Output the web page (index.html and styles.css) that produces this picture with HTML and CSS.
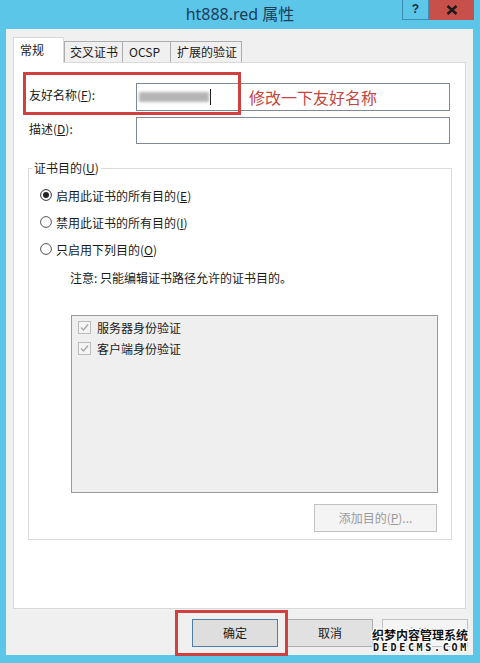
FILE: index.html
```html
<!DOCTYPE html>
<html lang="zh-CN">
<head>
<meta charset="UTF-8">
<title>ht888.red 属性</title>
<link rel="stylesheet" href="styles.css">
</head>
<body>

<div class="window">
  <div class="titlebar">
    <span class="title">ht888.red 属性</span>
    <div class="controls">
      <div class="btn-help">?</div>
      <div class="btn-close">
        <svg width="12" height="10" viewBox="0 0 12 10"><path d="M1.5 1 L10.5 9 M10.5 1 L1.5 9" stroke="#1b1b1b" stroke-width="2.4"/></svg>
      </div>
    </div>
  </div>

  <div class="dialog">
    <div class="tabs">
      <div class="tab active w-general">常规</div>
      <div class="tab w-cross">交叉证书</div>
      <div class="tab w-ocsp">OCSP</div>
      <div class="tab w-ext">扩展的验证</div>
    </div>

    <div class="panel">
      <div class="form">
        <label class="form-label">友好名称(<u>F</u>):</label>
        <div class="field">
          <span class="blurred"></span>
          <span class="caret"></span>
          <span class="note-red">修改一下友好名称</span>
        </div>
        <label class="form-label">描述(<u>D</u>):</label>
        <div class="field"></div>
      </div>

      <div class="group">
        <div class="group-title">证书目的(<u>U</u>)</div>
        <div class="radios">
          <div class="radio-row">
            <svg width="12" height="12" viewBox="0 0 12 12"><circle cx="6" cy="6" r="5.4" fill="#fff" stroke="#333" stroke-width="1"/><circle cx="6" cy="6" r="3" fill="#222"/></svg>
            <span>启用此证书的所有目的(<u>E</u>)</span>
          </div>
          <div class="radio-row">
            <svg width="12" height="12" viewBox="0 0 12 12"><circle cx="6" cy="6" r="5.4" fill="#fff" stroke="#555" stroke-width="1"/></svg>
            <span>禁用此证书的所有目的(<u>I</u>)</span>
          </div>
          <div class="radio-row">
            <svg width="12" height="12" viewBox="0 0 12 12"><circle cx="6" cy="6" r="5.4" fill="#fff" stroke="#555" stroke-width="1"/></svg>
            <span>只启用下列目的(<u>O</u>)</span>
          </div>
        </div>
        <div class="hint">注意: 只能编辑证书路径允许的证书目的。</div>

        <div class="listbox">
          <div class="list-item">
            <svg width="13" height="13" viewBox="0 0 13 13"><rect x="0.5" y="0.5" width="12" height="12" fill="#f4f4f4" stroke="#bcbcbc"/><path d="M3 6.5 L5.5 9 L10 3.5" fill="none" stroke="#a8a8a8" stroke-width="1.4"/></svg>
            <span>服务器身份验证</span>
          </div>
          <div class="list-item">
            <svg width="13" height="13" viewBox="0 0 13 13"><rect x="0.5" y="0.5" width="12" height="12" fill="#f4f4f4" stroke="#bcbcbc"/><path d="M3 6.5 L5.5 9 L10 3.5" fill="none" stroke="#a8a8a8" stroke-width="1.4"/></svg>
            <span>客户端身份验证</span>
          </div>
        </div>

        <div class="add-row">
          <div class="button disabled wide">添加目的(<u>P</u>)...</div>
        </div>
      </div>

      <div class="mark mark-name"></div>
    </div>

    <div class="actions">
      <div class="button default">确定</div>
      <div class="button">取消</div>
      <div class="button disabled">应用(<u>A</u>)</div>
    </div>

    <div class="mark mark-ok"></div>
  </div>

  <div class="watermark">
    <div class="wm-cn">织梦内容管理系统</div>
    <div class="wm-en">DEDECMS.COM</div>
  </div>
</div>

</body>
</html>
```

FILE: styles.css
```css
body {
  margin: 0;
  background-color: #5bc6e8;
  font-family: "Noto Sans CJK SC", "Noto Sans", sans-serif;
  font-size: 12px;
  color: #1a1a1a;
}

.window {
  position: relative;
  width: 480px;
  height: 663px;
  overflow: hidden;
}

/* title bar */
.titlebar {
  position: relative;
  height: 29px;
  text-align: center;
}

.title {
  display: inline-block;
  font-family: "Noto Sans", "Noto Sans CJK SC", sans-serif;
  font-size: 16px;
  line-height: 28px;
  color: #1e3d5c;
}

.controls {
  position: absolute;
  top: 0;
  right: 6px;
  display: flex;
}

.btn-help {
  width: 27px;
  height: 20px;
  box-sizing: border-box;
  border: 1px solid #3a8fb5;
  border-top: none;
  font-family: "Liberation Sans", sans-serif;
  font-weight: bold;
  font-size: 12px;
  line-height: 18px;
  text-align: center;
  color: #1b2f45;
}

.btn-close {
  width: 45px;
  height: 20px;
  background-color: #c7504b;
  display: flex;
  align-items: center;
  justify-content: center;
}

/* dialog body */
.dialog {
  position: relative;
  margin: 0 7px 0 6px;
  height: 626px;
  box-sizing: border-box;
  padding: 8px 7px 0 7px;
  background-color: #f0f0f0;
}

.tabs {
  display: flex;
  align-items: flex-end;
  height: 25px;
}

.tab {
  height: 21px;
  box-sizing: border-box;
  padding-left: 5px;
  border: 1px solid #adadad;
  border-bottom: none;
  border-left: none;
  background-color: #f0f0f0;
  line-height: 19px;
}

.tab.w-cross { border-left: 1px solid #adadad; }

.tab.active {
  position: relative;
  z-index: 1;
  height: 26px;
  margin-bottom: -1px;
  padding-left: 6px;
  line-height: 24px;
  background-color: #fff;
  border: 1px solid #d9d9d9;
  border-bottom: none;
}

.w-general { width: 51px; }
.w-cross { width: 59px; }
.w-ocsp { width: 48px; padding-left: 6px; }
.w-ext { width: 71px; padding-left: 6px; }

.panel {
  position: relative;
  height: 547px;
  box-sizing: border-box;
  border: 1px solid #d9d9d9;
  background-color: #fff;
  padding: 20px 0 0 14px;
}

.form {
  display: grid;
  grid-template-columns: 107px 314px;
  row-gap: 6px;
  padding-left: 1px;
}

.form-label {
  padding-top: 4px;
  line-height: 16px;
}

.field {
  height: 28px;
  box-sizing: border-box;
  border: 1px solid #7d8a96;
  background-color: #fff;
  display: flex;
  align-items: center;
  padding-left: 2px;
}

.field + .form-label + .field { height: 27px; }

.blurred {
  width: 70px;
  height: 10px;
  background-color: #b5b5b5;
  filter: blur(1.6px);
}

.caret {
  width: 1px;
  height: 16px;
  margin-left: 1px;
  background-color: #111;
}

.note-red {
  margin-left: 38px;
  font-size: 16px;
  line-height: 20px;
  color: #c4473f;
}

/* purpose group */
.group {
  width: 424px;
  margin-top: 24px;
  box-sizing: border-box;
  border: 1px solid #dcdcdc;
  padding: 0 0 7px 11px;
}

.group-title {
  width: max-content;
  margin: -9px 0 0 -8px;
  padding: 0 2px;
  background-color: #fff;
  line-height: 16px;
}

.radios {
  display: flex;
  flex-direction: column;
  gap: 7px;
  margin-top: 9px;
}

.radio-row {
  display: flex;
  align-items: center;
  gap: 4px;
  height: 20px;
}

.hint {
  margin-top: 11px;
  padding-left: 30px;
  line-height: 16px;
}

.listbox {
  width: 367px;
  height: 178px;
  box-sizing: border-box;
  margin: 29px 0 0 31px;
  border: 1px solid #9a9a9a;
  background-color: #efefef;
  padding: 1px 6px;
}

.list-item {
  display: flex;
  align-items: center;
  gap: 6px;
  height: 21px;
}

.add-row {
  display: flex;
  justify-content: flex-end;
  width: 366px;
  margin: 11px 0 0 31px;
}

/* buttons */
.button {
  width: 86px;
  height: 28px;
  box-sizing: border-box;
  border: 1px solid #adadad;
  background-color: #e1e1e1;
  text-align: center;
  line-height: 26px;
}

.button.default {
  border-color: #4f7ea8;
  background-color: #dedede;
}

.button.disabled {
  border-color: #c2c2c2;
  background-color: #f4f4f4;
  color: #9a9a9a;
}

.button.wide { width: 123px; }

.actions {
  display: flex;
  justify-content: flex-end;
  gap: 9px;
  margin: 10px -2px 0 0;
}

/* red annotation boxes */
.mark {
  position: absolute;
  border: 3px solid #d0403f;
  box-sizing: border-box;
}

.mark-name {
  left: 9px;
  top: 9px;
  width: 218px;
  height: 43px;
}

.mark-ok {
  left: 169px;
  top: 581px;
  width: 113px;
  height: 46px;
}

/* watermark */
.watermark {
  position: absolute;
  left: 371px;
  top: 627px;
  text-align: center;
  color: #111;
  text-shadow: 1px 0 #fff, -1px 0 #fff, 0 1px #fff, 0 -1px #fff, 1px 1px #fff, -1px -1px #fff, 1px -1px #fff, -1px 1px #fff;
}

.wm-cn {
  font-weight: bold;
  font-size: 12px;
  line-height: 15px;
  letter-spacing: 0;
}

.wm-en {
  font-family: "DejaVu Sans Mono", monospace;
  font-weight: bold;
  font-size: 10px;
  line-height: 11px;
  letter-spacing: 2.7px;
  margin-left: 2px;
}
```
